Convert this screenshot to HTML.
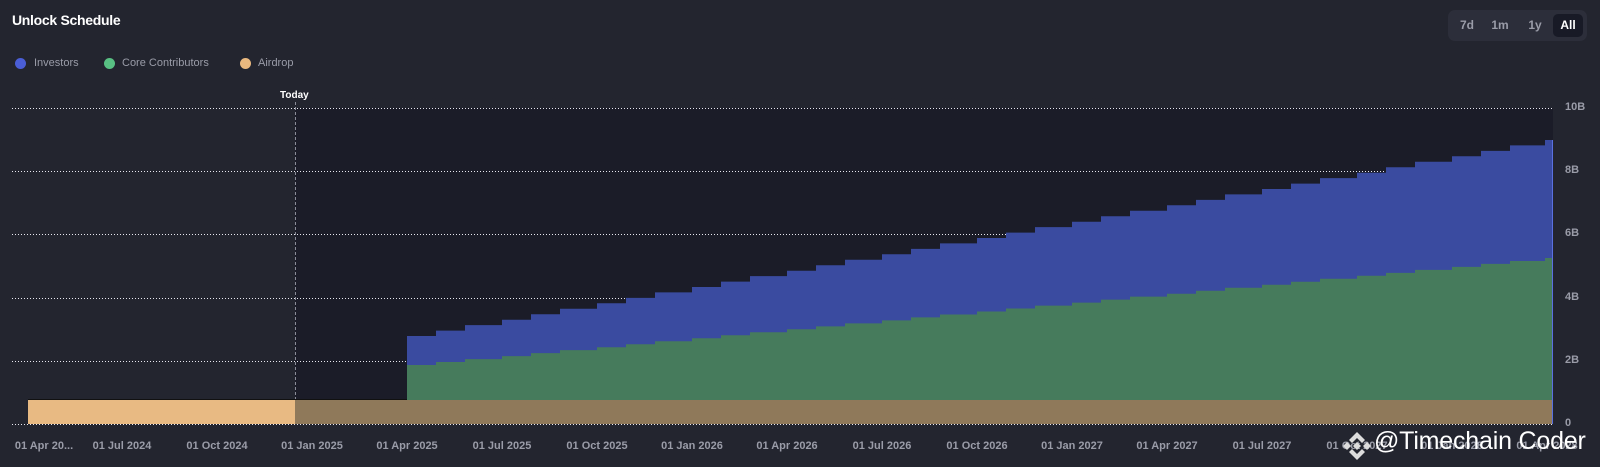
<!DOCTYPE html>
<html><head><meta charset="utf-8">
<style>
html,body{margin:0;padding:0;background:#23252f;}
body{width:1600px;height:467px;position:relative;overflow:hidden;font-family:"Liberation Sans",sans-serif;}
.t{position:absolute;white-space:nowrap;}
.title{left:12px;top:12px;font-size:14px;font-weight:bold;color:#fff;letter-spacing:-0.3px;}
.lg{top:57px;font-size:11px;color:#9a9ca8;}
.dot{position:absolute;top:58px;width:11px;height:11px;border-radius:50%;}
.btns{position:absolute;left:1448px;top:10px;width:139px;height:31px;background:#2c2e3a;border-radius:7px;}
.b{position:absolute;top:0;height:31px;line-height:31px;font-size:12px;font-weight:bold;color:#9a9ca8;transform:translateX(-50%);}
.act{position:absolute;left:1553px;top:14px;width:30px;height:23px;background:#181a26;border-radius:5px;}
.yl{left:1565px;font-size:11px;font-weight:bold;color:#9a9ca8;}
.xl{top:440px;font-size:11px;font-weight:bold;color:#9a9ca8;transform:translateX(-50%);}
</style></head><body>
<div class="t title">Unlock Schedule</div>
<div class="dot" style="left:15px;background:#4a5ed6"></div><div class="t lg" style="left:34px">Investors</div>
<div class="dot" style="left:104px;background:#58c083"></div><div class="t lg" style="left:122px">Core Contributors</div>
<div class="dot" style="left:240px;background:#eab97f"></div><div class="t lg" style="left:258px">Airdrop</div>
<div class="btns"></div><div class="act"></div>
<div class="b" style="left:1467px;top:10px">7d</div>
<div class="b" style="left:1500px;top:10px">1m</div>
<div class="b" style="left:1535px;top:10px">1y</div>
<div class="b" style="left:1568px;top:10px;color:#fff">All</div>
<div class="t" style="left:280px;top:90px;font-size:10px;font-weight:bold;color:#fff">Today</div>
<svg id="c" width="1600" height="467" style="position:absolute;left:0;top:0" xmlns="http://www.w3.org/2000/svg"></svg>
<div class="t yl" style="top:101px">10B</div>
<div class="t yl" style="top:164px">8B</div>
<div class="t yl" style="top:227px">6B</div>
<div class="t yl" style="top:291px">4B</div>
<div class="t yl" style="top:354px">2B</div>
<div class="t yl" style="top:417px">0</div>
<div class="t xl" style="left:44px">01 Apr 20...</div>
<div class="t xl" style="left:122px">01 Jul 2024</div>
<div class="t xl" style="left:217px">01 Oct 2024</div>
<div class="t xl" style="left:312px">01 Jan 2025</div>
<div class="t xl" style="left:407px">01 Apr 2025</div>
<div class="t xl" style="left:502px">01 Jul 2025</div>
<div class="t xl" style="left:597px">01 Oct 2025</div>
<div class="t xl" style="left:692px">01 Jan 2026</div>
<div class="t xl" style="left:787px">01 Apr 2026</div>
<div class="t xl" style="left:882px">01 Jul 2026</div>
<div class="t xl" style="left:977px">01 Oct 2026</div>
<div class="t xl" style="left:1072px">01 Jan 2027</div>
<div class="t xl" style="left:1167px">01 Apr 2027</div>
<div class="t xl" style="left:1262px">01 Jul 2027</div>
<div class="t xl" style="left:1357px">01 Oct 2027</div>
<div class="t xl" style="left:1452px">01 Jan 2028</div>
<div class="t xl" style="left:1547px">01 Apr 2028</div>
<svg width="30" height="30" viewBox="0 0 30 30" style="position:absolute;left:1342px;top:431px">
<g fill="#dcdcdc">
<path d="M15 1 L23 9 L20 12 L15 7 L10 12 L7 9 Z"/>
<path d="M15 29 L23 21 L20 18 L15 23 L10 18 L7 21 Z"/>
<path d="M15 11 L19 15 L15 19 L11 15 Z"/>
<path d="M5 11 L9 15 L5 19 L1 15 Z"/>
<path d="M25 11 L29 15 L25 19 L21 15 Z"/>
</g></svg>
<div class="t" style="left:1374px;top:427px;font-size:25px;color:#fff;letter-spacing:-0.2px">@Timechain Coder</div>
<script>
var s='';
s+='<rect x="295" y="108" width="1258" height="316" fill="#1b1c28"/>';
[108,171,234,298,361,424].forEach(function(y){s+='<line x1="12" x2="1553" y1="'+(y+0.5)+'" y2="'+(y+0.5)+'" stroke="#e8e8f0" stroke-width="1" stroke-dasharray="1,2"/>';});
s+='<line x1="295.5" x2="295.5" y1="102" y2="424" stroke="#8a8c98" stroke-dasharray="3,2"/>';
var xs=[];for(var k=0;k<=36;k++){var q=Math.floor(k/3),r=k%3;xs.push(407+95*q+[0,29,58][r]);}
xs[36]=1545;xs.push(1553);
function path(y0,y1){var d='M407 400';for(var i=0;i<=36;i++){var y=(y0+(y1-y0)*i/36).toFixed(1);d+=' L'+xs[i]+' '+y+' L'+xs[i+1]+' '+y;}d+=' L1553 400 Z';return d;}
s+='<path d="'+path(336,140)+'" fill="#3a4ba0"/>';
s+='<path d="'+path(365,258)+'" fill="#467b5c"/>';
s+='<rect x="28" y="400" width="267" height="24" fill="#e8ba83"/>';
s+='<rect x="295" y="400" width="1258" height="24" fill="#8f795a"/>';
s+='<line x1="28" x2="407" y1="399.5" y2="399.5" stroke="#111" stroke-width="1"/>';
s+='<line x1="1552.5" x2="1552.5" y1="140" y2="424" stroke="#5a70e0" stroke-width="1"/>';
document.getElementById('c').innerHTML=s;
</script>
</body></html>
